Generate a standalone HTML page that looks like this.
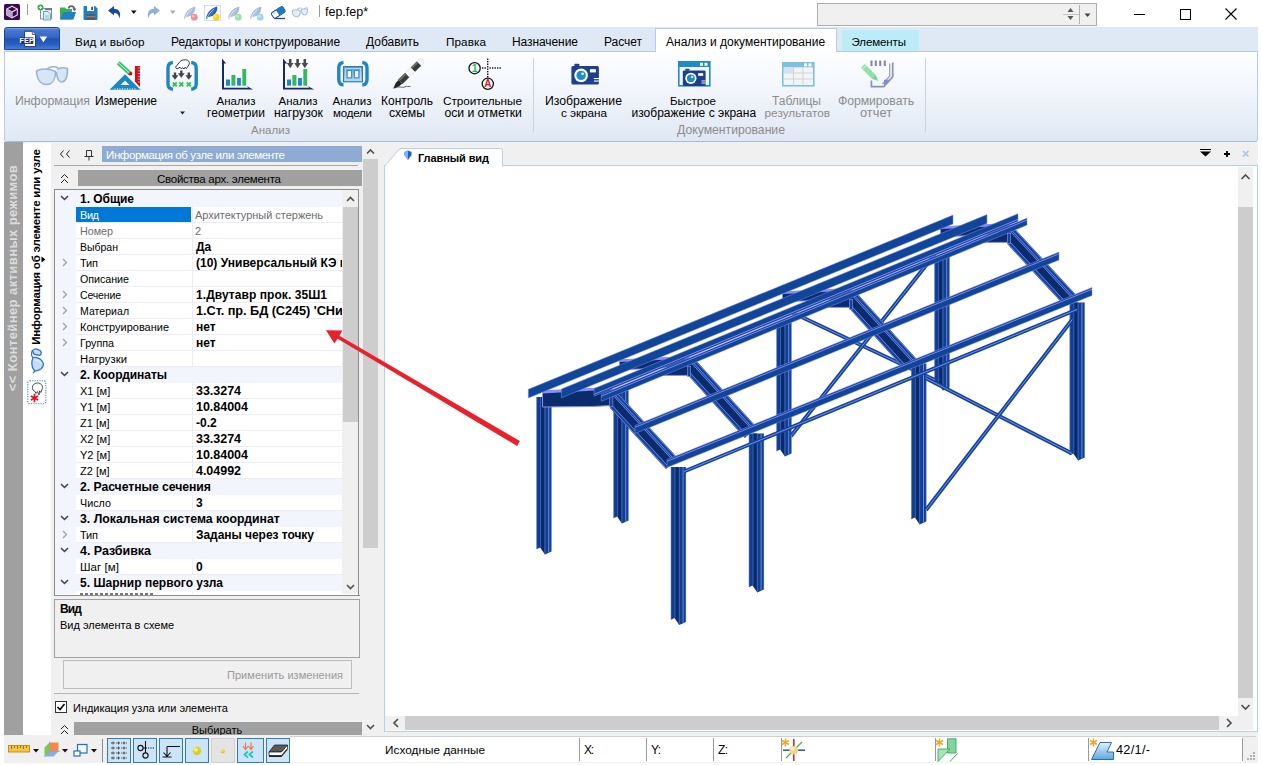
<!DOCTYPE html>
<html lang="ru"><head><meta charset="utf-8"><title>fep.fep*</title>
<style>

html,body{margin:0;padding:0;}
body{width:1262px;height:765px;overflow:hidden;background:#fff;position:relative;
 font-family:"Liberation Sans",sans-serif;font-size:12px;color:#000;}
.a{position:absolute;}
.t{position:absolute;white-space:nowrap;line-height:16px;height:16px;}
.b{font-weight:bold;}
.g{color:#8c8c8c;}
.c{text-align:center;transform:translateX(-50%);}
.pg{font-size:11px;}
svg{position:absolute;overflow:visible;}
.row{position:absolute;left:55px;width:287px;height:16px;}
.cat{background:#f3f5fc;}
.hl{position:absolute;height:1px;background:#ececf2;left:76px;width:266px;}
.tb{position:absolute;top:738px;width:22px;height:23px;border:1px solid #3a86c4;background:#cce4f7;}

</style></head>
<body>
<div class="a" style="left:319px;top:5px;width:1px;height:12px;background:#9a9a9a;"></div>
<div class="a" style="left:27px;top:4px;width:1px;height:11px;background:#9a9a9a;"></div>
<div class="a" style="left:816.5px;top:3px;width:278px;height:21px;background:#f0f0f0;border:1px solid #adadad;"></div>
<div class="a" style="left:1079px;top:5px;width:1px;height:19px;background:#b0b0b0;"></div>
<div class="a" style="left:1063px;top:14px;width:16px;height:1px;background:#c4c4c4;"></div>
<svg style="left:1066px;top:5px" width="30" height="18"><path d="M1.5 7 L4.5 3 L7.5 7Z M1.5 11 L4.5 15 L7.5 11Z" fill="#555"/><path d="M18.5 8.5 L24.5 8.5 L21.5 12Z" fill="#444"/></svg>
<svg style="left:1125px;top:0" width="137" height="27"><path d="M9 14.5H20" stroke="#000" stroke-width="1" fill="none"/><rect x="55.5" y="9.5" width="10" height="10" stroke="#000" fill="none"/><path d="M100.5 8.5 L111.5 19.5 M111.5 8.5 L100.5 19.5" stroke="#000" stroke-width="1.1" fill="none"/></svg>
<div class="a" style="left:4px;top:27px;width:1254px;height:24px;background:#dfe9f5;"></div>
<div class="a" style="left:4px;top:27px;width:54px;height:21px;background:linear-gradient(#86a8e6 0,#4a79d2 8%,#3565c4 45%,#1f52b2 52%,#2c60c2 80%,#4a7cd6 100%);border:1px solid #1a479c;border-radius:3px 3px 0 0;"></div>
<svg style="left:4px;top:27px" width="57" height="24"><path d="M20.600 4.300 h7.700 l3.200 3.200 v12.100 h-10.900 z" fill="#fff" stroke="#1a2f70" stroke-width="0.900"/><path d="M28.300 4.300 v3.200 h3.200" fill="#dfe8f8" stroke="#1a2f70" stroke-width="0.700"/><rect x="16.300" y="10.300" width="13" height="6.600" fill="#1a2f70"/><text x="22.800" y="16.200" font-size="7.200" font-weight="bold" fill="#fff" text-anchor="middle" font-family="Liberation Sans, sans-serif" letter-spacing="0.2">FEP</text><path d="M35.600 9.600 h7.600 l-3.800 5.700 z" fill="#fff"/></svg>
<div class="a" style="left:655px;top:28px;width:180px;height:24px;background:#fff;border:1px solid #b9cbe2;border-bottom:none;"></div>
<div class="a" style="left:841.5px;top:30px;width:75px;height:21px;background:#bcecf7;border:1px solid #bcecf7;border-bottom:none;"></div>
<div class="a" style="left:4px;top:51px;width:1252px;height:89px;background:linear-gradient(#fdfeff,#f1f5fb 45%,#dfe8f4);border:1px solid #b9cbe2;border-bottom-color:#a9bdd9;border-radius:0 0 3px 3px;"></div>
<div class="a" style="left:656px;top:51px;width:180px;height:1px;background:#fdfeff;"></div>
<div class="a" style="left:533px;top:58px;width:1px;height:74px;background:#c9d3e0;"></div>
<div class="a" style="left:925px;top:58px;width:1px;height:74px;background:#c9d3e0;"></div>
<svg style="left:179px;top:110px" width="8" height="6"><path d="M1 1.5h5l-2.5 3z" fill="#222"/></svg>
<div class="a" style="left:4px;top:142px;width:1254px;height:595px;background:#f0f0f0;"></div>
<div class="a" style="left:4px;top:142px;width:19px;height:593px;background:#a0a0a0;"></div>
<div class="a" style="left:23px;top:143px;width:28px;height:592px;background:#fff;border-radius:4px 0 0 4px;"></div>
<span id="vv1" class="t b" style="left:12.5px;top:277.7px;font-size:13px;color:#dcdcdc;letter-spacing:0.42px;transform:translate(-50%,-50%) rotate(-90deg);">&lt;&lt; Контейнер активных режимов</span>
<span id="vv2" class="t b" style="left:36px;top:247.2px;font-size:11.5px;letter-spacing:-0.2px;transform:translate(-50%,-50%) rotate(-90deg);">Информация об элементе или узле</span>
<svg style="left:41px;top:255.5px" width="6" height="8"><path d="M0.5 0.5v6l4-3z" fill="#000"/></svg>
<div class="a" style="left:102px;top:146px;width:260px;height:16px;background:#8eabd3;"></div>
<svg style="left:58px;top:146px" width="44" height="18"><path d="M5.5 4.5L2.5 8l3 3.5M11.5 4.5L8.5 8l3 3.5" stroke="#222" stroke-width="1" fill="none"/><path d="M28.5 4.5h5v5.5M28.5 4.5v5.5M26.5 10.500h9M31 10.500v4" stroke="#333" stroke-width="1" fill="none"/></svg>
<div class="a" style="left:54px;top:165px;width:304px;height:1px;background:#a8a8a8;"></div>
<div class="a" style="left:78px;top:170px;width:284px;height:16px;background:#a0a0a0;"></div>
<svg style="left:58px;top:171px" width="14" height="16"><path d="M3 7l3.500-3.500L10 7M3 12l3.500-3.500L10 12" stroke="#222" stroke-width="1" fill="none"/></svg>
<div class="a" style="left:363px;top:146px;width:15px;height:589px;background:#f0f0f0;"></div>
<div class="a" style="left:363px;top:159px;width:15px;height:389px;background:#cdcdcd;"></div>
<svg style="left:363px;top:146px" width="15" height="12"><path d="M4 7.500l3.500-3.500 3.500 3.500" stroke="#505050" stroke-width="1.6" fill="none"/></svg>
<svg style="left:363px;top:721px" width="15" height="12"><path d="M4 4l3.500 3.500 3.500-3.500" stroke="#505050" stroke-width="1.6" fill="none"/></svg>
<div class="a" style="left:54px;top:189px;width:304px;height:405px;background:#fff;border:1px solid #8c8c8c;overflow:hidden;"></div>
<div class="a" style="left:55px;top:190px;width:21px;height:404px;background:#f3f5fc;"></div>
<div class="a" style="left:191.5px;top:190px;width:1px;height:404px;background:#ececf2;"></div>
<div class="a" style="left:55px;top:190px;width:287px;height:17px;background:#f3f5fc;"></div>
<svg style="left:59px;top:193px" width="12" height="10"><path d="M2 3l3.500 3.500L9 3" stroke="#404040" stroke-width="1.500" fill="none"/></svg>
<div class="a" style="left:76px;top:222px;width:266px;height:1px;background:#ececf2;"></div>
<div class="a" style="left:76px;top:207px;width:115px;height:15px;background:#0078d7;"></div>
<div class="a" style="left:76px;top:238px;width:266px;height:1px;background:#ececf2;"></div>
<div class="a" style="left:76px;top:254px;width:266px;height:1px;background:#ececf2;"></div>
<div class="a" style="left:76px;top:270px;width:266px;height:1px;background:#ececf2;"></div>
<svg style="left:60px;top:256.5px" width="10" height="12"><path d="M3 2l3.500 3.500L3 9" stroke="#a0a0a0" stroke-width="1.300" fill="none"/></svg>
<div class="a" style="left:76px;top:286px;width:266px;height:1px;background:#ececf2;"></div>
<div class="a" style="left:76px;top:302px;width:266px;height:1px;background:#ececf2;"></div>
<svg style="left:60px;top:288.5px" width="10" height="12"><path d="M3 2l3.500 3.500L3 9" stroke="#a0a0a0" stroke-width="1.300" fill="none"/></svg>
<div class="a" style="left:76px;top:318px;width:266px;height:1px;background:#ececf2;"></div>
<svg style="left:60px;top:304.5px" width="10" height="12"><path d="M3 2l3.500 3.500L3 9" stroke="#a0a0a0" stroke-width="1.300" fill="none"/></svg>
<div class="a" style="left:76px;top:334px;width:266px;height:1px;background:#ececf2;"></div>
<svg style="left:60px;top:320.5px" width="10" height="12"><path d="M3 2l3.500 3.500L3 9" stroke="#a0a0a0" stroke-width="1.300" fill="none"/></svg>
<div class="a" style="left:76px;top:350px;width:266px;height:1px;background:#ececf2;"></div>
<svg style="left:60px;top:336.5px" width="10" height="12"><path d="M3 2l3.500 3.500L3 9" stroke="#a0a0a0" stroke-width="1.300" fill="none"/></svg>
<div class="a" style="left:76px;top:366px;width:266px;height:1px;background:#ececf2;"></div>
<div class="a" style="left:55px;top:367px;width:287px;height:16px;background:#f3f5fc;"></div>
<svg style="left:59px;top:369px" width="12" height="10"><path d="M2 3l3.500 3.500L9 3" stroke="#404040" stroke-width="1.500" fill="none"/></svg>
<div class="a" style="left:76px;top:398px;width:266px;height:1px;background:#ececf2;"></div>
<div class="a" style="left:76px;top:414px;width:266px;height:1px;background:#ececf2;"></div>
<div class="a" style="left:76px;top:430px;width:266px;height:1px;background:#ececf2;"></div>
<div class="a" style="left:76px;top:446px;width:266px;height:1px;background:#ececf2;"></div>
<div class="a" style="left:76px;top:462px;width:266px;height:1px;background:#ececf2;"></div>
<div class="a" style="left:76px;top:478px;width:266px;height:1px;background:#ececf2;"></div>
<div class="a" style="left:55px;top:479px;width:287px;height:16px;background:#f3f5fc;"></div>
<svg style="left:59px;top:481px" width="12" height="10"><path d="M2 3l3.500 3.500L9 3" stroke="#404040" stroke-width="1.500" fill="none"/></svg>
<div class="a" style="left:76px;top:510px;width:266px;height:1px;background:#ececf2;"></div>
<div class="a" style="left:55px;top:511px;width:287px;height:16px;background:#f3f5fc;"></div>
<svg style="left:59px;top:513px" width="12" height="10"><path d="M2 3l3.500 3.500L9 3" stroke="#404040" stroke-width="1.500" fill="none"/></svg>
<div class="a" style="left:76px;top:542px;width:266px;height:1px;background:#ececf2;"></div>
<svg style="left:60px;top:528.5px" width="10" height="12"><path d="M3 2l3.500 3.500L3 9" stroke="#a0a0a0" stroke-width="1.300" fill="none"/></svg>
<div class="a" style="left:55px;top:543px;width:287px;height:16px;background:#f3f5fc;"></div>
<svg style="left:59px;top:545px" width="12" height="10"><path d="M2 3l3.500 3.500L9 3" stroke="#404040" stroke-width="1.500" fill="none"/></svg>
<div class="a" style="left:76px;top:574px;width:266px;height:1px;background:#ececf2;"></div>
<div class="a" style="left:55px;top:575px;width:287px;height:16px;background:#f3f5fc;"></div>
<svg style="left:59px;top:577px" width="12" height="10"><path d="M2 3l3.500 3.500L9 3" stroke="#404040" stroke-width="1.500" fill="none"/></svg>
<div class="a" style="left:80px;top:593px;width:75px;height:1.5px;background:repeating-linear-gradient(90deg,#555 0 3px,#fff 3px 5px);opacity:.8;"></div>
<div class="a" style="left:54px;top:599px;width:304px;height:57px;border:1px solid #a0a0a0;background:#f0f0f0;"></div>
<div class="a" style="left:63px;top:660px;width:287px;height:27px;border:1px solid #bdbdbd;background:#f0f0f0;"></div>
<div class="a" style="left:54px;top:693px;width:305px;height:1px;background:#b4b4b4;"></div>
<div class="a" style="left:55px;top:701px;width:10px;height:10px;border:1px solid #333;background:#fff;"></div>
<svg style="left:55px;top:701px" width="12" height="12"><path d="M2.500 6l2.500 2.500L9.500 3" stroke="#000" stroke-width="1.600" fill="none"/></svg>
<div class="a" style="left:74px;top:722px;width:288px;height:13px;background:#a0a0a0;overflow:hidden;"><span id="sel" class="t c" style="left:143px;top:0px;font-size:11px;">Выбирать</span></div>
<svg style="left:58px;top:722px" width="14" height="13"><path d="M3 7l3.500-3.500L10 7M3 12l3.500-3.500L10 12" stroke="#222" stroke-width="1" fill="none"/></svg>
<div class="a" style="left:384px;top:165px;width:872px;height:565px;background:#fff;border:1px solid #b9cfe6;"></div>
<svg style="left:384px;top:145px" width="130" height="22"><path d="M0.500 21.500 L14 5.500 Q15.500 3.500 18 3.500 H116.500 Q118.500 3.500 118.500 5.500 V21.500" fill="#fff" stroke="#b9cfe6"/><path d="M24 5.500l3.500 1.500v3l-3.500 5-3.500-5v-3z" fill="#1f5fd0"/><path d="M24 5.500l-3.500 1.500v3l3.500 5z" fill="#7fb2ff"/></svg>
<svg style="left:1195px;top:146px" width="62" height="16"><path d="M5 3.500h11" stroke="#000" stroke-width="1"/><path d="M5 5.500h11l-5.500 5z" fill="#000"/><path d="M29 8h6M32 5v6" stroke="#000" stroke-width="1.800"/><path d="M48 5l5.500 5.500M53.500 5L48 10.500" stroke="#a9c4e4" stroke-width="1.700"/></svg>
<div class="a" style="left:1238px;top:167px;width:15px;height:549px;background:#f0f0f0;"></div>
<div class="a" style="left:1238px;top:207px;width:15px;height:491px;background:#cdcdcd;"></div>
<svg style="left:1238px;top:171px" width="15" height="12"><path d="M3.500 8l4-4 4 4" stroke="#505050" stroke-width="1.700" fill="none"/></svg>
<svg style="left:1238px;top:701px" width="15" height="12"><path d="M3.500 4l4 4 4-4" stroke="#505050" stroke-width="1.700" fill="none"/></svg>
<div class="a" style="left:385px;top:716px;width:868px;height:14px;background:#f0f0f0;"></div>
<div class="a" style="left:405px;top:716px;width:814px;height:14px;background:#cdcdcd;"></div>
<svg style="left:390px;top:716px" width="12" height="14"><path d="M8 3l-4 4 4 4" stroke="#505050" stroke-width="1.700" fill="none"/></svg>
<svg style="left:1223px;top:716px" width="12" height="14"><path d="M4 3l4 4-4 4" stroke="#505050" stroke-width="1.700" fill="none"/></svg>
<div class="a" style="left:4px;top:735px;width:1254px;height:28px;background:#f0f0f0;"></div>
<div class="a" style="left:290px;top:736px;width:966px;height:1px;background:#d0d0d0;"></div>
<div class="a" style="left:290px;top:737px;width:953px;height:25px;background:#fff;"></div>
<div class="a" style="left:579px;top:738px;width:1px;height:23px;background:#9a9a9a;"></div>
<div class="a" style="left:646px;top:738px;width:1px;height:23px;background:#9a9a9a;"></div>
<div class="a" style="left:713px;top:738px;width:1px;height:23px;background:#9a9a9a;"></div>
<div class="a" style="left:780.5px;top:738px;width:1px;height:23px;background:#9a9a9a;"></div>
<div class="a" style="left:934.5px;top:738px;width:1px;height:23px;background:#9a9a9a;"></div>
<div class="a" style="left:1088px;top:738px;width:1px;height:23px;background:#9a9a9a;"></div>
<div class="a" style="left:1242px;top:738px;width:1px;height:23px;background:#9a9a9a;"></div>
<svg style="left:1245px;top:750px" width="12" height="12"><g fill="#b0b0b0"><rect x="8" y="2" width="2" height="2"/><rect x="5" y="5" width="2" height="2"/><rect x="8" y="5" width="2" height="2"/><rect x="2" y="8" width="2" height="2"/><rect x="5" y="8" width="2" height="2"/><rect x="8" y="8" width="2" height="2"/></g></svg>
<div class="a" style="left:101.5px;top:739px;width:1px;height:23px;background:#8c8c8c;"></div>
<span id="ttl" class="t" style="left:325.0px;top:3.5px;font-size:12.5px;letter-spacing:-0.01px;">fep.fep*</span>
<span id="tab1" class="t" style="left:75.0px;top:34.0px;font-size:11.75px;letter-spacing:0.07px;">Вид и выбор</span>
<span id="tab2" class="t" style="left:171.0px;top:34.0px;letter-spacing:-0.01px;">Редакторы и конструирование</span>
<span id="tab3" class="t" style="left:366.0px;top:34.0px;letter-spacing:-0.01px;">Добавить</span>
<span id="tab4" class="t" style="left:446.0px;top:34.0px;font-size:11.75px;letter-spacing:0.06px;">Правка</span>
<span id="tab5" class="t" style="left:512.0px;top:34.0px;letter-spacing:-0.08px;">Назначение</span>
<span id="tab6" class="t" style="left:604.0px;top:34.0px;letter-spacing:-0.03px;">Расчет</span>
<span id="tab7" class="t" style="left:666.0px;top:34.0px;letter-spacing:0.01px;">Анализ и документирование</span>
<span id="tab8" class="t" style="left:851.5px;top:34.0px;font-size:11.5px;letter-spacing:-0.10px;">Элементы</span>
<span id="r1" class="t g" style="left:15.0px;top:93.0px;font-size:12.25px;">Информация</span>
<span id="r2" class="t" style="left:95.0px;top:93.0px;letter-spacing:-0.05px;">Измерение</span>
<span id="r3a" class="t  c" style="left:236.0px;top:93.0px;font-size:11.5px;letter-spacing:0.03px;">Анализ</span>
<span id="r3b" class="t  c" style="left:236.0px;top:105.0px;letter-spacing:0.05px;">геометрии</span>
<span id="r4a" class="t  c" style="left:298.0px;top:93.0px;font-size:11.5px;letter-spacing:0.03px;">Анализ</span>
<span id="r4b" class="t  c" style="left:298.5px;top:105.0px;font-size:12.25px;letter-spacing:0.07px;">нагрузок</span>
<span id="r5a" class="t  c" style="left:352.0px;top:93.0px;font-size:11.5px;letter-spacing:0.03px;">Анализ</span>
<span id="r5b" class="t  c" style="left:352.4px;top:105.0px;font-size:11.5px;letter-spacing:-0.18px;">модели</span>
<span id="r6a" class="t  c" style="left:407.0px;top:93.0px;letter-spacing:-0.02px;">Контроль</span>
<span id="r6b" class="t  c" style="left:407.0px;top:105.0px;font-size:12.25px;letter-spacing:-0.04px;">схемы</span>
<span id="r7a" class="t  c" style="left:482.5px;top:93.0px;font-size:11.75px;letter-spacing:-0.03px;">Строительные</span>
<span id="r7b" class="t  c" style="left:483.2px;top:105.0px;font-size:12.25px;letter-spacing:-0.06px;">оси и отметки</span>
<span id="rg1" class="t g c" style="left:270.5px;top:122.0px;font-size:11.5px;letter-spacing:0.03px;">Анализ</span>
<span id="r8a" class="t  c" style="left:583.5px;top:93.0px;font-size:12.25px;letter-spacing:-0.02px;">Изображение</span>
<span id="r8b" class="t  c" style="left:584.0px;top:105.0px;font-size:11.75px;letter-spacing:-0.05px;">с экрана</span>
<span id="r9a" class="t  c" style="left:693.0px;top:93.0px;font-size:11.5px;">Быстрое</span>
<span id="r9b" class="t  c" style="left:693.8px;top:105.0px;letter-spacing:0.01px;">изображение с экрана</span>
<span id="r10a" class="t g c" style="left:796.5px;top:93.0px;">Таблицы</span>
<span id="r10b" class="t g c" style="left:797.3px;top:105.0px;font-size:11.75px;letter-spacing:0.02px;">результатов</span>
<span id="r11a" class="t g c" style="left:876.0px;top:93.0px;font-size:12.25px;letter-spacing:-0.07px;">Формировать</span>
<span id="r11b" class="t g c" style="left:876.0px;top:105.0px;font-size:12.75px;letter-spacing:0.05px;">отчет</span>
<span id="rg2" class="t g c" style="left:731.0px;top:122.0px;font-size:12.25px;letter-spacing:-0.03px;">Документирование</span>
<span id="pt" class="t" style="left:106.0px;top:146.8px;font-size:11.5px;letter-spacing:-0.39px;color:#fff;">Информация об узле или элементе</span>
<span id="ph" class="t" style="left:157.0px;top:170.8px;font-size:11.5px;letter-spacing:-0.26px;">Свойства арх. элемента</span>
<span id="c0" class="t b" style="left:80.0px;top:190.8px;letter-spacing:-0.04px;">1. Общие</span>
<span id="n1" class="t" style="left:80.0px;top:206.8px;font-size:11px;letter-spacing:-0.45px;color:#fff;">Вид</span>
<span id="v1" class="t" style="left:195.0px;top:206.8px;font-size:11px;letter-spacing:-0.03px;color:#6d6d6d;">Архитектурный стержень</span>
<span id="n2" class="t" style="left:80.0px;top:222.8px;font-size:10.75px;letter-spacing:-0.02px;color:#6d6d6d;">Номер</span>
<span id="v2" class="t" style="left:195.0px;top:222.8px;font-size:11px;color:#6d6d6d;">2</span>
<span id="n3" class="t" style="left:80.0px;top:238.8px;font-size:10.5px;letter-spacing:-0.01px;">Выбран</span>
<span id="v3" class="t b" style="left:196.0px;top:238.8px;">Да</span>
<span id="n4" class="t" style="left:80.0px;top:254.8px;font-size:11px;letter-spacing:-0.17px;">Тип</span>
<span id="v4" class="t b" style="left:196.0px;top:254.8px;letter-spacing:0.01px;">(10) Универсальный КЭ п</span>
<span id="n5" class="t" style="left:80.0px;top:270.8px;font-size:10.75px;letter-spacing:-0.07px;">Описание</span>
<span id="n6" class="t" style="left:80.0px;top:286.8px;font-size:10.5px;letter-spacing:-0.15px;">Сечение</span>
<span id="v6" class="t b" style="left:196.0px;top:286.8px;letter-spacing:0.07px;">1.Двутавр прок. 35Ш1</span>
<span id="n7" class="t" style="left:80.0px;top:302.8px;font-size:10.5px;letter-spacing:0.05px;">Материал</span>
<span id="v7" class="t b" style="left:196.0px;top:302.8px;font-size:12.75px;letter-spacing:-0.06px;">1.Ст. пр. БД (С245) 'СНиП</span>
<span id="n8" class="t" style="left:80.0px;top:318.8px;font-size:11px;letter-spacing:-0.01px;">Конструирование</span>
<span id="v8" class="t b" style="left:196.0px;top:318.8px;">нет</span>
<span id="n9" class="t" style="left:80.0px;top:334.8px;font-size:10.75px;letter-spacing:-0.02px;">Группа</span>
<span id="v9" class="t b" style="left:196.0px;top:334.8px;">нет</span>
<span id="n10" class="t" style="left:80.0px;top:350.8px;font-size:11.25px;letter-spacing:0.06px;">Нагрузки</span>
<span id="c11" class="t b" style="left:80.0px;top:366.8px;letter-spacing:-0.03px;">2. Координаты</span>
<span id="n12" class="t" style="left:80.0px;top:382.8px;font-size:11px;">X1 [м]</span>
<span id="v12" class="t b" style="left:196.0px;top:382.8px;font-size:12.5px;letter-spacing:-0.03px;">33.3274</span>
<span id="n13" class="t" style="left:80.0px;top:398.8px;font-size:11px;">Y1 [м]</span>
<span id="v13" class="t b" style="left:196.0px;top:398.8px;font-size:12.5px;letter-spacing:-0.02px;">10.84004</span>
<span id="n14" class="t" style="left:80.0px;top:414.8px;font-size:11px;">Z1 [м]</span>
<span id="v14" class="t b" style="left:196.0px;top:414.8px;">-0.2</span>
<span id="n15" class="t" style="left:80.0px;top:430.8px;font-size:11px;">X2 [м]</span>
<span id="v15" class="t b" style="left:196.0px;top:430.8px;font-size:12.5px;letter-spacing:-0.03px;">33.3274</span>
<span id="n16" class="t" style="left:80.0px;top:446.8px;font-size:11px;">Y2 [м]</span>
<span id="v16" class="t b" style="left:196.0px;top:446.8px;font-size:12.5px;letter-spacing:-0.02px;">10.84004</span>
<span id="n17" class="t" style="left:80.0px;top:462.8px;font-size:11px;">Z2 [м]</span>
<span id="v17" class="t b" style="left:196.0px;top:462.8px;font-size:12.5px;letter-spacing:-0.03px;">4.04992</span>
<span id="c18" class="t b" style="left:80.0px;top:478.8px;font-size:12.25px;letter-spacing:-0.06px;">2. Расчетные сечения</span>
<span id="n19" class="t" style="left:80.0px;top:494.8px;font-size:10.75px;letter-spacing:0.02px;">Число</span>
<span id="v19" class="t b" style="left:196.0px;top:494.8px;">3</span>
<span id="c20" class="t b" style="left:80.0px;top:510.8px;font-size:12.25px;letter-spacing:0.02px;">3. Локальная система координат</span>
<span id="n21" class="t" style="left:80.0px;top:526.8px;font-size:11px;letter-spacing:-0.17px;">Тип</span>
<span id="v21" class="t b" style="left:196.0px;top:526.8px;letter-spacing:-0.04px;">Заданы через точку</span>
<span id="c22" class="t b" style="left:80.0px;top:542.8px;font-size:12.5px;letter-spacing:-0.04px;">4. Разбивка</span>
<span id="n23" class="t" style="left:80.0px;top:558.8px;font-size:11.5px;letter-spacing:0.06px;">Шаг [м]</span>
<span id="v23" class="t b" style="left:196.0px;top:558.8px;">0</span>
<span id="c24" class="t b" style="left:80.0px;top:574.8px;letter-spacing:0.02px;">5. Шарнир первого узла</span>
<span id="d1" class="t b" style="left:60.0px;top:600.8px;letter-spacing:-0.84px;">Вид</span>
<span id="d2" class="t" style="left:60.0px;top:616.8px;font-size:11px;letter-spacing:-0.01px;">Вид элемента в схеме</span>
<span id="ab" class="t" style="left:227.0px;top:666.8px;font-size:11px;letter-spacing:0.05px;color:#9a9a9a;">Применить изменения</span>
<span id="cb" class="t" style="left:73.0px;top:699.8px;font-size:11px;letter-spacing:-0.03px;">Индикация узла или элемента</span>
<span id="vt" class="t b" style="left:418.0px;top:149.5px;font-size:11px;letter-spacing:-0.09px;">Главный вид</span>
<span id="s1" class="t" style="left:385.0px;top:742.0px;font-size:11.75px;letter-spacing:0.05px;">Исходные данные</span>
<span id="s2" class="t" style="left:584.0px;top:742.0px;letter-spacing:-1.20px;">X:</span>
<span id="s3" class="t" style="left:651.0px;top:742.0px;letter-spacing:-0.69px;">Y:</span>
<span id="s4" class="t" style="left:718.0px;top:742.0px;letter-spacing:-0.67px;">Z:</span>
<span id="s5" class="t" style="left:1116.0px;top:742.0px;font-size:12.75px;letter-spacing:0.28px;">42/1/-</span>
<div class="a" style="left:342px;top:190px;width:16px;height:404px;background:#f0f0f0;"></div>
<div class="a" style="left:343px;top:207px;width:15px;height:215px;background:#cdcdcd;"></div>
<svg style="left:343px;top:193px" width="15" height="12"><path d="M4 8l3.500-3.500 3.500 3.500" stroke="#505050" stroke-width="1.6" fill="none"/></svg>
<svg style="left:343px;top:581px" width="15" height="12"><path d="M4 4l3.500 3.500 3.500-3.500" stroke="#505050" stroke-width="1.6" fill="none"/></svg>
<div class="a" style="left:358px;top:189px;width:1px;height:406px;background:#8c8c8c;"></div>
<div class="a" style="left:359px;top:189px;width:4px;height:406px;background:#f0f0f0;"></div><svg style="left:4px;top:4px;" width="16" height="16" viewBox="0 0 16 16"><rect width="16" height="16" rx="1.500" fill="#3a0a52"/><path d="M8 2.200 L13.300 5 V11 L8 13.800 L2.700 11 V5 Z" fill="none" stroke="#e8d8f0" stroke-width="1.100"/><path d="M2.700 5 L8 8 L13.300 5 M8 8 V13.800" stroke="#e8d8f0" stroke-width="1.100" fill="none"/><path d="M2.700 5 L8 8 V13.800 L2.700 11 Z" fill="#b9a6c8"/></svg>
<svg style="left:37px;top:4px;" width="18" height="17" viewBox="0 0 18 17"><path d="M3.500 4.500 H14.500 V15 H3.500 Z" fill="#f4f6f8" stroke="#7a8694" stroke-width="0.9"/><rect x="8" y="4" width="7" height="2.200" fill="#6f7b88"/><path d="M6.500 7.500 H11 L13.500 10 V16 H6.500 Z" fill="#d9ecf8" stroke="#4c9bd0" stroke-width="0.9"/><path d="M8 12 h4 M8 14 h4" stroke="#7cc88c" stroke-width="0.9"/><circle cx="3.500" cy="3.500" r="3" fill="#35b44a"/><path d="M2 3.500 h3 M3.500 2 v3" stroke="#fff" stroke-width="1"/></svg>
<svg style="left:59px;top:4px;" width="18" height="17" viewBox="0 0 18 17"><path d="M1 3.500 H6 L7.500 5 H13 V15.500 H1 Z" fill="#3cb054"/><path d="M4.500 8 H17 L14.500 15.500 H1.500 Z" fill="#1f7fc8"/><path d="M9.500 4.500 C10 1.500 14.500 1 15.500 5" stroke="#5a6470" stroke-width="1.600" fill="none"/><path d="M13.500 4.500 h4 l-2 2.800 z" fill="#5a6470"/></svg>
<svg style="left:83px;top:5px;" width="15" height="16" viewBox="0 0 15 16"><path d="M0.500 2 Q0.500 1 1.500 1 H12 L14.500 3.500 V14 Q14.500 15 13.500 15 H1.500 Q0.500 15 0.500 14 Z" fill="#1f80c8"/><rect x="4" y="1" width="7" height="5" fill="#fff"/><rect x="8.200" y="1.800" width="1.800" height="3.200" fill="#4a4a4a"/><rect x="3.500" y="9" width="8.500" height="6" fill="#5a5a5a"/><rect x="3.500" y="11.300" width="8.500" height="0.900" fill="#9a9a9a"/></svg>
<svg style="left:107px;top:5px;" width="16" height="15" viewBox="0 0 16 15"><path d="M1 5.500 L7 1 V3.800 C12 3.800 14.500 8 12.500 13.500 C12 9.500 10 8 7 8 V10.500 Z" fill="#1b4a96"/></svg>
<svg style="left:130px;top:10px;" width="8" height="5" viewBox="0 0 8 5"><path d="M1 0.500 h5.600 l-2.800 3.400 z" fill="#111"/></svg>
<svg style="left:145px;top:5px;" width="16" height="15" viewBox="0 0 16 15"><path d="M15 5.500 L9 1 V3.800 C4 3.800 1.500 8 3.500 13.500 C4 9.500 6 8 9 8 V10.500 Z" fill="#8fb0d8"/></svg>
<svg style="left:169px;top:10px;" width="8" height="5" viewBox="0 0 8 5"><path d="M1 0.500 h5.600 l-2.800 3.400 z" fill="#a8a8a8"/></svg>
<svg style="left:182px;top:5px;" width="17" height="16" viewBox="0 0 17 16"><path d="M2 14 C2.800 9 5 4 13.200 1.600 C13.800 5 12 9.800 7.500 11.200 C6 11.600 4.800 11.600 4.200 12 L2.800 14.200 Z" fill="#a4bcd9"/><path d="M2.600 13.800 C4.500 9.500 7 6.500 10.500 4" stroke="#fff" stroke-width="0.700" fill="none" opacity="0.850"/><path d="M6 10.800 L9.500 6.500 M4.800 9.500 L7.800 5.500" stroke="#fff" stroke-width="0.400" opacity="0.600"/><circle cx="12.200" cy="12.200" r="3.400" fill="#ee8f96"/><circle cx="11.300" cy="11.200" r="1.300" fill="#fff" opacity="0.450"/></svg>
<svg style="left:204px;top:5px;" width="17" height="16" viewBox="0 0 17 16"><rect x="0.500" y="0.500" width="16" height="15" fill="#fbfcfe" stroke="#cdd5e0" stroke-width="0.800"/><path d="M2 14 C2.800 9 5 4 13.200 1.600 C13.800 5 12 9.800 7.500 11.200 C6 11.600 4.800 11.600 4.200 12 L2.800 14.200 Z" fill="#1f5fb4"/><path d="M2.600 13.800 C4.500 9.500 7 6.500 10.500 4" stroke="#fff" stroke-width="0.700" fill="none" opacity="0.850"/><path d="M6 10.800 L9.500 6.500 M4.800 9.500 L7.800 5.500" stroke="#fff" stroke-width="0.400" opacity="0.600"/><circle cx="12.200" cy="12.200" r="3.400" fill="#ffd21e"/><circle cx="11.300" cy="11.200" r="1.300" fill="#fff" opacity="0.450"/></svg>
<svg style="left:226px;top:5px;" width="17" height="16" viewBox="0 0 17 16"><path d="M2 14 C2.800 9 5 4 13.200 1.600 C13.800 5 12 9.800 7.500 11.200 C6 11.600 4.800 11.600 4.200 12 L2.800 14.200 Z" fill="#a4bcd9"/><path d="M2.600 13.800 C4.500 9.500 7 6.500 10.500 4" stroke="#fff" stroke-width="0.700" fill="none" opacity="0.850"/><path d="M6 10.800 L9.500 6.500 M4.800 9.500 L7.800 5.500" stroke="#fff" stroke-width="0.400" opacity="0.600"/><circle cx="12.200" cy="12.200" r="3.400" fill="#9fe0a4"/><circle cx="11.300" cy="11.200" r="1.300" fill="#fff" opacity="0.450"/></svg>
<svg style="left:248px;top:5px;" width="17" height="16" viewBox="0 0 17 16"><path d="M2 14 C2.800 9 5 4 13.200 1.600 C13.800 5 12 9.800 7.500 11.200 C6 11.600 4.800 11.600 4.200 12 L2.800 14.200 Z" fill="#a4bcd9"/><path d="M2.600 13.800 C4.500 9.500 7 6.500 10.500 4" stroke="#fff" stroke-width="0.700" fill="none" opacity="0.850"/><path d="M6 10.800 L9.500 6.500 M4.800 9.500 L7.800 5.500" stroke="#fff" stroke-width="0.400" opacity="0.600"/><circle cx="12.200" cy="12.200" r="3.400" fill="#a8d0ea"/><circle cx="11.300" cy="11.200" r="1.300" fill="#fff" opacity="0.450"/></svg>
<svg style="left:270px;top:5px;" width="17" height="16" viewBox="0 0 17 16"><g transform="rotate(-33 8 7.500)"><rect x="1.500" y="4.300" width="13.500" height="6.600" rx="1.600" fill="#fff" stroke="#1b4a96" stroke-width="1"/><path d="M7.500 4.300 H13.400 Q15 4.300 15 5.900 V9.300 Q15 10.900 13.400 10.900 H7.500 Z" fill="#1f78c0"/><path d="M3.500 6 h2.500" stroke="#9ab8dc" stroke-width="0.800"/></g><path d="M4.500 13.500 H15" stroke="#1b4a96" stroke-width="1.300"/></svg>
<svg style="left:291px;top:6px;" width="18" height="13" viewBox="0 0 18 13"><g fill="#e6eff9" stroke="#a8bfde" stroke-width="1.100" stroke-linejoin="round"><path d="M10 4.200 C11.500 3 14.500 2.600 16.500 3.200 C16.800 6 16 8.800 13.800 9 C12 9 10.600 7 10 4.200 Z"/><path d="M1.200 4.800 C3.500 3.600 7 3.600 9.300 4.800 C9.300 8 8 10.800 5.500 10.800 C3 10.800 1.500 8 1.200 4.800 Z"/></g><path d="M5.500 3.800 C7 2 9.500 1.500 11.500 2.500 M13 2.800 C14.500 1.600 16 1.600 17 2.200" stroke="#a8bfde" stroke-width="1" fill="none"/></svg>
<svg style="left:34px;top:64px;" width="36" height="24" viewBox="0 0 36 24"><g fill="#d7e6f5" stroke="#9db3d4" stroke-width="1.600" stroke-linejoin="round"><path d="M23 5.500 C26 3 30 3.500 33.500 4.500 C33.500 12 31.500 18 27.500 18 C24.500 18 23 14 22.500 8"/><path d="M2.500 7 C7 4 16 4.500 21.500 7.500 C21.500 15 18.500 20.500 12.500 20.500 C6.500 20.500 3 15 2.500 7 Z"/></g><path d="M13 5 C16 2.500 21 2 24 4" stroke="#9db3d4" stroke-width="1.600" fill="none"/></svg>
<svg style="left:108px;top:60px;" width="34" height="32" viewBox="0 0 34 32"><path d="M26.900 5.900 H32 V26.900 L26.900 21.500 Z" fill="#c8141e"/><path d="M29.800 8 h2.200 M29.800 10.800 h2.200 M29.800 13.600 h2.200 M29.800 16.400 h2.200 M29.800 19.200 h2.200 M29.800 22 h2.200" stroke="#f09aa0" stroke-width="0.900"/><path d="M1.500 29.700 L17 14.200 L32.500 29.700 Z" fill="#1f86c4"/><path d="M12.600 24.900 L17 20.600 L21.400 24.900 Z" fill="#f2f7fc"/><path d="M7 28 v1.700 M9.500 28 v1.700 M12 28 v1.700 M14.500 28 v1.700 M17 28 v1.700 M19.500 28 v1.700 M22 28 v1.700 M24.500 28 v1.700 M27 28 v1.700" stroke="#d8ecf8" stroke-width="0.800"/><path d="M8.700 4.200 L11.700 1.200 L22.800 11.300 L19.800 14.300 Z" fill="#3cc46c"/><path d="M10.200 2.700 L21.300 12.800" stroke="#d0f5dc" stroke-width="0.900"/><path d="M19.800 14.300 L22.800 11.300 L24.600 13 L23.700 15 L21.700 15.500 Z" fill="#c8141e"/><path d="M22.600 13.800 L24.200 15.300 L22.300 14.900 Z" fill="#401010"/></svg>
<svg style="left:165px;top:59px;" width="34" height="33" viewBox="0 0 34 33"><path d="M8 3.500 C4.500 3.800 3 5.500 3 9 V25 C3 28.500 4.500 30 8 30.300" stroke="#1f86c4" stroke-width="3.400" fill="none"/><path d="M26.200 3.500 C29.700 3.800 31.200 5.500 31.200 9 V25 C31.200 28.500 29.700 30 26.200 30.300" stroke="#1f86c4" stroke-width="3.400" fill="none"/><path d="M8.8 13.6 h2.400 v2.600 h2.200 l-3.400 4.600 l-3.400 -4.600 h2.200 z" fill="#454545"/><path d="M15.1 11.6 h2.400 v2.600 h2.200 l-3.400 4.600 l-3.400 -4.600 h2.200 z" fill="#454545"/><path d="M22.6 13.6 h2.400 v2.600 h2.200 l-3.400 4.600 l-3.400 -4.600 h2.200 z" fill="#454545"/><path d="M7.8 23.400 l4 4 M11.8 23.400 l-4 4" stroke="#35c050" stroke-width="1.900"/><path d="M14.3 23.400 l4 4 M18.3 23.400 l-4 4" stroke="#35c050" stroke-width="1.900"/><path d="M21.8 23.400 l4 4 M25.8 23.400 l-4 4" stroke="#35c050" stroke-width="1.900"/><path d="M10.500 8.200 L14.500 3.200 C16 0.800 20 0.200 22.500 1.200 C24.500 2.200 24.800 4.500 23.800 6 L21.500 9.500 L20 8.200 L19 10 L17.600 8.600 L16.500 10 L15 8.200 L12 10 Z" fill="#fff" stroke="#222" stroke-width="0.900" stroke-linejoin="round"/></svg>
<svg style="left:220px;top:58px;" width="35" height="33" viewBox="0 0 35 33"><path d="M2 0.600 L6.200 5.400 H4 V29.800 H28.400 L26.500 28 L33.200 31.600 H2 Z" fill="#15296b"/><rect x="6" y="21.500" width="4" height="6.200" fill="#1f86c4"/><rect x="11.400" y="17" width="4" height="10.700" fill="#35b861"/><rect x="17.100" y="20" width="3.800" height="7.700" fill="#1f86c4"/><rect x="22.300" y="11" width="3.900" height="16.700" fill="#35b861"/></svg>
<svg style="left:281.3px;top:58px;" width="35" height="33" viewBox="0 0 35 33"><path d="M2 0.600 L6.200 5.400 H4 V29.800 H28.400 L26.500 28 L33.200 31.600 H2 Z" fill="#15296b"/><rect x="6" y="21.500" width="4" height="6.200" fill="#1f86c4"/><rect x="11.400" y="17" width="4" height="10.700" fill="#35b861"/><rect x="17.100" y="20" width="3.800" height="7.700" fill="#1f86c4"/><rect x="22.300" y="11" width="3.900" height="16.700" fill="#35b861"/><path d="M7.9 1 h2.600 v4 h2 l-3.300 5.200 l-3.300 -5.200 h2 z" fill="#4a4a4a"/><path d="M15.3 1 h2.600 v4 h2 l-3.300 5.200 l-3.300 -5.200 h2 z" fill="#4a4a4a"/><path d="M22.5 1 h2.600 v4 h2 l-3.300 5.200 l-3.300 -5.200 h2 z" fill="#4a4a4a"/></svg>
<svg style="left:336px;top:61px;" width="34" height="26" viewBox="0 0 34 26"><defs><linearGradient id="mg" x1="0" y1="0" x2="0" y2="1"><stop offset="0" stop-color="#4f9cd2"/><stop offset="1" stop-color="#a6d4f2"/></linearGradient></defs><path d="M7.500 1.500 C4 1.800 2.800 3.500 2.800 7 V18.500 C2.800 22 4 23.700 7.500 24" stroke="#1f86c4" stroke-width="3.400" fill="none"/><path d="M26.300 1.500 C29.800 1.800 31 3.500 31 7 V18.500 C31 22 29.800 23.700 26.300 24" stroke="#1f86c4" stroke-width="3.400" fill="none"/><rect x="7.500" y="5.600" width="19" height="15.200" fill="url(#mg)" stroke="#2a78b4" stroke-width="1.100"/><rect x="9.300" y="7.400" width="15.400" height="11.600" fill="none" stroke="#c4e0f4" stroke-width="0.900"/><rect x="11.200" y="9.600" width="4.200" height="7.200" fill="#f6faff" stroke="#3a80bc" stroke-width="0.900"/><rect x="18.600" y="9.600" width="4.200" height="7.200" fill="#f6faff" stroke="#3a80bc" stroke-width="0.900"/></svg>
<svg style="left:391px;top:57px;" width="36" height="34" viewBox="0 0 36 34"><path d="M4 31 C8 28.500 11 31.500 14 29.800 C16 28.800 17.500 30 19.500 29.300" stroke="#555" stroke-width="0.900" fill="none"/><g transform="translate(2.200,31.700) rotate(-44.200)"><rect x="8" y="-3" width="33.500" height="6" rx="2.600" fill="#f4f4f4" stroke="#d6d6d6" stroke-width="0.500"/><path d="M0 0 L6 -2.400 H10 V2.400 H6 Z" fill="#222"/><rect x="10" y="-3" width="9.500" height="6" fill="#3a3a3a"/><rect x="10" y="-3" width="9.500" height="2" fill="#6a6a6a"/><rect x="27.500" y="-3" width="8.500" height="6" fill="#3a3a3a"/><rect x="27.500" y="-3" width="8.500" height="2" fill="#6a6a6a"/></g></svg>
<svg style="left:465px;top:57.5px;" width="40" height="34" viewBox="0 0 40 34"><rect x="22" y="0.5" width="1.400" height="1.400" fill="#111"/><rect x="22" y="3" width="1.400" height="1.400" fill="#111"/><rect x="22" y="5.5" width="1.400" height="1.400" fill="#111"/><rect x="22" y="8" width="1.400" height="1.400" fill="#111"/><rect x="22" y="10.5" width="1.400" height="1.400" fill="#111"/><rect x="22" y="13" width="1.400" height="1.400" fill="#111"/><rect x="22" y="15.5" width="1.400" height="1.400" fill="#111"/><rect x="22" y="18" width="1.400" height="1.400" fill="#111"/><rect x="17" y="9.300" width="1.400" height="1.400" fill="#111"/><rect x="19.5" y="9.300" width="1.400" height="1.400" fill="#111"/><rect x="24.5" y="9.300" width="1.400" height="1.400" fill="#111"/><rect x="27" y="9.300" width="1.400" height="1.400" fill="#111"/><rect x="29.5" y="9.300" width="1.400" height="1.400" fill="#111"/><rect x="32" y="9.300" width="1.400" height="1.400" fill="#111"/><rect x="34.5" y="9.300" width="1.400" height="1.400" fill="#111"/><circle cx="9.600" cy="10.200" r="5.600" fill="#fff" stroke="#111" stroke-width="1.300"/><text x="9.600" y="14" font-size="10.500" font-weight="bold" fill="#28b860" text-anchor="middle" font-family="Liberation Sans, sans-serif">1</text><circle cx="22.800" cy="25.800" r="5.600" fill="#fff" stroke="#111" stroke-width="1.300"/><text x="22.800" y="29.400" font-size="10" font-weight="bold" fill="#e0141e" text-anchor="middle" font-family="Liberation Sans, sans-serif">A</text></svg>
<svg style="left:571px;top:63px;" width="29" height="23" viewBox="0 0 29 23"><g transform="translate(0.4,0.2) scale(1)"><rect x="3" y="0.600" width="5" height="2.500" rx="0.800" fill="#1e3f8c"/><rect x="0" y="2.800" width="27.500" height="18.600" rx="1.600" fill="#1e3f8c"/><circle cx="9.700" cy="12.200" r="6.800" fill="#fff"/><circle cx="9.700" cy="12.200" r="4.700" fill="#1f8cc8"/><circle cx="11.200" cy="10.600" r="1.400" fill="#d8f0ff"/><rect x="18.500" y="6" width="6" height="3.200" fill="#fff"/><rect x="22.500" y="14.800" width="5" height="1.100" fill="#fff"/><rect x="22.500" y="17.300" width="5" height="1.100" fill="#fff"/></g></svg>
<svg style="left:678px;top:61px;" width="33" height="26" viewBox="0 0 33 26"><rect x="0.800" y="0.800" width="31" height="24" fill="#f4f8fc" stroke="#1f8cc8" stroke-width="1.600"/><rect x="0.800" y="0.500" width="31" height="5.500" fill="#1f8cc8"/><rect x="22" y="1.800" width="3" height="3" fill="#fff"/><rect x="26.500" y="1.800" width="3" height="3" fill="#fff"/><g transform="translate(4.8,7.2) scale(0.83)"><rect x="3" y="0.600" width="5" height="2.500" rx="0.800" fill="#1e3f8c"/><rect x="0" y="2.800" width="27.500" height="18.600" rx="1.600" fill="#1e3f8c"/><circle cx="9.700" cy="12.200" r="6.800" fill="#fff"/><circle cx="9.700" cy="12.200" r="4.700" fill="#1f8cc8"/><circle cx="11.200" cy="10.600" r="1.400" fill="#d8f0ff"/><rect x="18.500" y="6" width="6" height="3.200" fill="#fff"/><rect x="22.500" y="14.800" width="5" height="1.100" fill="#fff"/><rect x="22.500" y="17.300" width="5" height="1.100" fill="#fff"/></g></svg>
<svg style="left:781.5px;top:61.5px;" width="33" height="25" viewBox="0 0 33 25"><rect x="0.800" y="0.800" width="31" height="23" fill="#f2f5f8" stroke="#7cc0e0" stroke-width="1.600"/><rect x="0.800" y="0.500" width="31" height="4.800" fill="#7cc0e0"/><rect x="22" y="1.400" width="3" height="3" fill="#fff"/><rect x="26.500" y="1.400" width="3" height="3" fill="#fff"/><rect x="2" y="5.500" width="9" height="5" fill="#d3e3f0"/><path d="M11.500 5.500 V23.500 M21 5.500 V23.500 M1.500 11 H31 M1.500 17 H31" stroke="#d2d2d2" stroke-width="1"/></svg>
<svg style="left:860px;top:59px;" width="36" height="30" viewBox="0 0 36 30"><path d="M11.400 21.500 V27.600 H23.800 L32.700 17.800 V3.500" stroke="#8a93b4" stroke-width="1.700" fill="none"/><path d="M29.700 4.500 V17.200 L22.500 25" stroke="#9aa3c0" stroke-width="1.300" fill="none"/><path d="M24 27.200 V20.800 H30 Z" fill="#7f8fc4"/><path d="M11.500 1.400 v5.600 M15.800 1.400 v5.600 M20.200 1.400 v5.600 M24.800 1.400 v5.600" stroke="#7c86ac" stroke-width="2"/><path d="M1 8.800 L4.800 5 L15.500 15.700 L11.700 19.500 Z" fill="#8fe2a6"/><path d="M11.700 19.500 L15.500 15.700 L18.300 22 Z" fill="#70d492"/><path d="M2.600 10 L6 6.600" stroke="#e4faec" stroke-width="1"/></svg>
<svg style="left:30px;top:348px;" width="15" height="26" viewBox="0 0 15 26"><g fill="#c4dcf4" stroke="#2f74c8" stroke-width="1.300" stroke-linejoin="round"><path d="M2.400 2.600 C4 1 6.500 0.800 7.600 1.400 C9.500 2 11 3.200 11.200 4.400 C11.200 6 10.800 6.800 10 7.300 C8 7.300 6 6.800 4.100 6.100 Z"/><path d="M2.900 9.600 C5.500 9.200 8.500 10 10.600 11.400 C12.500 12.800 13.500 14.500 13.500 16.100 C13.500 18 12.500 19.800 11.200 20.800 C9 22.300 6.500 23 4.700 23.200 C3 21 1.800 18.500 1.800 16.100 C1.800 13.500 2.200 11.500 2.900 9.600 Z"/></g><path d="M2.400 2.600 C1.200 5 1.500 8 2.900 9.600 M4.700 23.200 L3.200 25" stroke="#2f74c8" stroke-width="1.300" fill="none"/><path d="M5 12 C7 12 10 13.500 11 15.500" stroke="#eef6ff" stroke-width="1.200" fill="none"/></svg>
<svg style="left:27px;top:379.5px;" width="20" height="25" viewBox="0 0 20 25"><rect x="0.800" y="0.800" width="18" height="23" rx="2" fill="#fff" stroke="#3c8cd0" stroke-width="1.100" stroke-dasharray="1.200 1.200"/><path d="M6 10 C4.200 6 7 3 10.500 3 C14 3 16 5.500 15.300 8.500 L13.800 12.500 L12.600 10.800 L12 15 L10.400 11.500 L9 13.500 L7.800 11.200 Z" fill="#fff" stroke="#333" stroke-width="0.900" stroke-linejoin="round"/><path d="M7.500 13.800 v8.400 M3.900 15.900 l7.200 4.200 M11.100 15.900 l-7.200 4.200" stroke="#e01020" stroke-width="1.700"/></svg>
<svg style="left:8px;top:745px;" width="24" height="9" viewBox="0 0 24 9"><rect x="0.500" y="0.500" width="21" height="6.500" fill="#f6c544" stroke="#b88a1a" stroke-width="0.900"/><path d="M3.500 1 v3 M6.500 1 v2 M9.500 1 v3 M12.500 1 v2 M15.500 1 v3 M18.500 1 v2" stroke="#7a5a10" stroke-width="0.800"/></svg>
<svg style="left:32px;top:747.5px;" width="8" height="6" viewBox="0 0 8 6"><path d="M1 1 h6 l-3 3.600 z" fill="#111"/></svg>
<svg style="left:43px;top:741px;" width="18" height="19" viewBox="0 0 18 19"><path d="M6.500 1.500 H15.500 V10.500 H6.500 Z" fill="#f08a50"/><path d="M6.500 1.500 L1.500 6.500 V15.500 L6.500 10.500 Z" fill="#7cc850"/><path d="M6.500 10.500 H15.500 L10.500 15.500 H1.500 Z" fill="#7fb0e8"/><path d="M6.500 10.500 L1 16 M6.500 10.500 H17 M6.500 10.500 V0.500" stroke="#888" stroke-width="0.500"/></svg>
<svg style="left:61px;top:747.5px;" width="8" height="6" viewBox="0 0 8 6"><path d="M1 1 h6 l-3 3.600 z" fill="#111"/></svg>
<svg style="left:73px;top:743px;" width="16" height="15" viewBox="0 0 16 15"><rect x="4.500" y="1.500" width="9.500" height="8.500" fill="#eef5fb" stroke="#2a6eb0" stroke-width="1.200"/><rect x="1" y="8" width="6" height="5" fill="#fff" stroke="#2a6eb0" stroke-width="1.200"/></svg>
<svg style="left:90px;top:747.5px;" width="8" height="6" viewBox="0 0 8 6"><path d="M1 1 h6 l-3 3.600 z" fill="#111"/></svg>
<div class="a" style="left:107px;top:738px;width:22px;height:23px;border:1px solid #2f7cb8;background:#cce4f7;"></div>
<div class="a" style="left:133px;top:738px;width:22px;height:23px;border:1px solid #2f7cb8;background:#cce4f7;"></div>
<div class="a" style="left:159px;top:738px;width:22px;height:23px;border:1px solid #2f7cb8;background:#cce4f7;"></div>
<div class="a" style="left:185px;top:738px;width:22px;height:23px;border:1px solid #2f7cb8;background:#cce4f7;"></div>
<div class="a" style="left:211px;top:738px;width:22px;height:23px;border:1px solid #d0d0d0;background:#e4e4e4;"></div>
<div class="a" style="left:237px;top:738px;width:25px;height:23px;border:1px solid #2f7cb8;background:#cce4f7;"></div>
<div class="a" style="left:266px;top:738px;width:22px;height:23px;border:1px solid #2f7cb8;background:#cce4f7;"></div>
<svg style="left:110px;top:740px;" width="18" height="21" viewBox="0 0 18 21"><path d="M1 3 H17" stroke="#555" stroke-width="0.900" stroke-dasharray="1 1.500"/><path d="M1 8 H17" stroke="#555" stroke-width="0.900" stroke-dasharray="1 1.500"/><path d="M1 13 H17" stroke="#555" stroke-width="0.900" stroke-dasharray="1 1.500"/><path d="M1 18 H17" stroke="#555" stroke-width="0.900" stroke-dasharray="1 1.500"/><path d="M3 1.5 v3 M1.5 3 h3" stroke="#444" stroke-width="0.800"/><path d="M3 6.5 v3 M1.5 8 h3" stroke="#444" stroke-width="0.800"/><path d="M3 11.5 v3 M1.5 13 h3" stroke="#444" stroke-width="0.800"/><path d="M3 16.5 v3 M1.5 18 h3" stroke="#444" stroke-width="0.800"/><path d="M8.5 1.5 v3 M7 3 h3" stroke="#444" stroke-width="0.800"/><path d="M8.5 6.5 v3 M7 8 h3" stroke="#444" stroke-width="0.800"/><path d="M8.5 11.5 v3 M7 13 h3" stroke="#444" stroke-width="0.800"/><path d="M8.5 16.5 v3 M7 18 h3" stroke="#444" stroke-width="0.800"/><path d="M14 1.5 v3 M12.5 3 h3" stroke="#444" stroke-width="0.800"/><path d="M14 6.5 v3 M12.5 8 h3" stroke="#444" stroke-width="0.800"/><path d="M14 11.5 v3 M12.5 13 h3" stroke="#444" stroke-width="0.800"/><path d="M14 16.5 v3 M12.5 18 h3" stroke="#444" stroke-width="0.800"/></svg>
<svg style="left:135px;top:740px;" width="22" height="21" viewBox="0 0 22 21"><circle cx="5.500" cy="8" r="2.600" fill="none" stroke="#111" stroke-width="1.100"/><circle cx="10.500" cy="15.500" r="2.600" fill="none" stroke="#111" stroke-width="1.100"/><path d="M10.500 1 V13 M8 8 H12" stroke="#111" stroke-width="1.100"/><path d="M13 8 H19" stroke="#111" stroke-width="1.100" stroke-dasharray="1.200 1.200"/></svg>
<svg style="left:161px;top:742px;" width="22" height="18" viewBox="0 0 22 18"><path d="M6 4.500 H19 M6 4.500 V14.500 M1.500 15 H10.500 M2.500 10.500 L6 14.500 L9.500 10.500" stroke="#111" stroke-width="1.100" fill="none"/></svg>
<svg style="left:191px;top:745px;" width="12" height="12" viewBox="0 0 12 12"><circle cx="6" cy="6" r="4.200" fill="#d8d020"/><circle cx="4.800" cy="4.800" r="2" fill="#f4f080"/></svg>
<svg style="left:219px;top:748px;" width="8" height="8" viewBox="0 0 8 8"><circle cx="3.800" cy="3.500" r="2.100" fill="#d8d020"/><circle cx="3.300" cy="3" r="0.900" fill="#f4f080"/></svg>
<svg style="left:242px;top:741px;" width="14" height="19" viewBox="0 0 14 19"><path d="M3.500 1.500 V8 M1 5 L3.500 8.500 L6 5 M9 1.500 V8 M6.500 5 L9 8.500 L11.500 5" stroke="#f0743c" stroke-width="1.100" fill="none"/><path d="M6 10.500 L2.500 13.500 L6 16.500 M11 10.500 L7.500 13.500 L11 16.500" stroke="#20c8b8" stroke-width="1.800" fill="none"/></svg>
<svg style="left:268px;top:743px;" width="22" height="16" viewBox="0 0 22 16"><path d="M6.500 2 H19.500 L13.500 9 H1 Z" fill="#5a5a5a" stroke="#222" stroke-width="0.800"/><path d="M1 9 H13.500 L19.500 2 V5.500 L13.500 12.500 H1 Z" fill="#fff" stroke="#222" stroke-width="0.800"/><path d="M1 12.500 H13.500 L19.500 5.500 V7 L13.500 14 H1 Z" fill="#222"/></svg>
<svg style="left:781px;top:738px;" width="26" height="24" viewBox="0 0 26 24"><path d="M12.800 1 V23" stroke="#c8202a" stroke-width="1.500"/><path d="M2 12.200 H24" stroke="#1a5aa8" stroke-width="1.500"/><path d="M5 20 L21 4" stroke="#40b858" stroke-width="1.200"/><circle cx="12.800" cy="12.200" r="4.300" fill="#f6d088"/><circle cx="11.800" cy="11" r="2" fill="#fdeec8"/><path d="M4.500 0.500 v8 M1 2.500 l7 4 M8 2.500 l-7 4" stroke="#f5a623" stroke-width="1.500"/></svg>
<svg style="left:935px;top:738px;" width="26" height="25" viewBox="0 0 26 25"><path d="M12.500 0.800 H21 V15 H12.500 Z" fill="#7fd69a" stroke="#38a860" stroke-width="0.900"/><path d="M3 11 H15 L3 23.500 Z" fill="#a8e6b8" stroke="#38a860" stroke-width="0.900"/><path d="M15 23.500 L22.500 15.500" stroke="#38a860" stroke-width="1"/><path d="M4.500 0.500 v8 M1 2.500 l7 4 M8 2.500 l-7 4" stroke="#f5a623" stroke-width="1.500"/></svg>
<svg style="left:1089px;top:738px;" width="26" height="24" viewBox="0 0 26 24"><defs><linearGradient id="zg" x1="0" y1="0" x2="0" y2="1"><stop offset="0" stop-color="#e4f2fb"/><stop offset="1" stop-color="#5aa8d8"/></linearGradient></defs><path d="M11 4.500 H22.500 L18 14 H24.500 V21.500 H2.500 Z" fill="url(#zg)" stroke="#2a6eb0" stroke-width="1"/><path d="M4.500 0.500 v8 M1 2.500 l7 4 M8 2.500 l-7 4" stroke="#f5a623" stroke-width="1.500"/></svg><svg style="left:0;top:0" width="1262" height="765" viewBox="0 0 1262 765" fill="none">
<path d="M536.5 397.0 V549.2 l3.600 -1.600 l4.800 7 l6.600 -3.200 V397.0 Z" fill="#123e90"/><path d="M540.9 397.0 V547.8 l3.900 5.600 V397.0 Z" fill="#0a2968"/><line x1="536.7" y1="397.0" x2="536.7" y2="549.2" stroke="#7f90e8" stroke-width="0.4"/><line x1="540.6" y1="397.0" x2="540.6" y2="547.8" stroke="#3a62b6" stroke-width="0.9"/><line x1="544.9" y1="397.0" x2="544.9" y2="554.2" stroke="#4670c4" stroke-width="0.9"/><line x1="548.7" y1="397.0" x2="548.7" y2="552.4" stroke="#658aea" stroke-width="1.0"/><line x1="551.3" y1="397.0" x2="551.3" y2="551.0" stroke="#6f88e0" stroke-width="0.4"/>
<path d="M613.5 389.0 V518.2 l3.600 -1.600 l4.800 7 l6.600 -3.200 V389.0 Z" fill="#123e90"/><path d="M617.9 389.0 V516.8 l3.900 5.600 V389.0 Z" fill="#0a2968"/><line x1="613.7" y1="389.0" x2="613.7" y2="518.2" stroke="#7f90e8" stroke-width="0.4"/><line x1="617.6" y1="389.0" x2="617.6" y2="516.8" stroke="#3a62b6" stroke-width="0.9"/><line x1="621.9" y1="389.0" x2="621.9" y2="523.2" stroke="#4670c4" stroke-width="0.9"/><line x1="625.7" y1="389.0" x2="625.7" y2="521.4" stroke="#658aea" stroke-width="1.0"/><line x1="628.3" y1="389.0" x2="628.3" y2="520.0" stroke="#6f88e0" stroke-width="0.4"/>
<path d="M776.5 322.0 V451.2 l3.600 -1.600 l4.800 7 l6.600 -3.200 V322.0 Z" fill="#123e90"/><path d="M780.9 322.0 V449.8 l3.900 5.600 V322.0 Z" fill="#0a2968"/><line x1="776.7" y1="322.0" x2="776.7" y2="451.2" stroke="#7f90e8" stroke-width="0.4"/><line x1="780.6" y1="322.0" x2="780.6" y2="449.8" stroke="#3a62b6" stroke-width="0.9"/><line x1="784.9" y1="322.0" x2="784.9" y2="456.2" stroke="#4670c4" stroke-width="0.9"/><line x1="788.7" y1="322.0" x2="788.7" y2="454.4" stroke="#658aea" stroke-width="1.0"/><line x1="791.3" y1="322.0" x2="791.3" y2="453.0" stroke="#6f88e0" stroke-width="0.4"/>
<path d="M934.5 257.0 V385.2 l3.600 -1.600 l4.800 7 l6.600 -3.200 V257.0 Z" fill="#123e90"/><path d="M938.9 257.0 V383.8 l3.900 5.600 V257.0 Z" fill="#0a2968"/><line x1="934.7" y1="257.0" x2="934.7" y2="385.2" stroke="#7f90e8" stroke-width="0.4"/><line x1="938.6" y1="257.0" x2="938.6" y2="383.8" stroke="#3a62b6" stroke-width="0.9"/><line x1="942.9" y1="257.0" x2="942.9" y2="390.2" stroke="#4670c4" stroke-width="0.9"/><line x1="946.7" y1="257.0" x2="946.7" y2="388.4" stroke="#658aea" stroke-width="1.0"/><line x1="949.3" y1="257.0" x2="949.3" y2="387.0" stroke="#6f88e0" stroke-width="0.4"/>
<line x1="791.0" y1="312.0" x2="935.0" y2="380.0" stroke="#114598" stroke-width="4.00"/><line x1="791.0" y1="312.0" x2="935.0" y2="380.0" stroke="#8b8ef6" stroke-width="0.90"/>
<line x1="791.0" y1="436.0" x2="935.0" y2="254.0" stroke="#114598" stroke-width="4.00"/><line x1="791.0" y1="436.0" x2="935.0" y2="254.0" stroke="#8b8ef6" stroke-width="0.90"/>
<path d="M542.5 391 L612 387.5 L612 405.5 L592 406.5 L542.5 407 Z" fill="#0a2c6c" stroke="#8b8ef6" stroke-width="1"/>
<path d="M542.5 390.5 L612 387 L612 389.5 L542.5 393.5 Z" fill="#8b8ef6"/>
<path d="M619.5 360.0 L689.0 356.5 L689.0 366.5 L619.5 370.0 Z" fill="#0a2c6c" stroke="#8b8ef6" stroke-width="0.8"/>
<path d="M619.5 359.5 L689.0 356.0 L689.0 358.5 L619.5 362.0 Z" fill="#8b8ef6"/>
<path d="M655.0 375.4 L689.0 364.5 L690.5 375.4 Z" fill="#0a2c6c" stroke="#8b8ef6" stroke-width="0.9"/>
<path d="M782.5 292.0 L852.0 288.5 L852.0 298.5 L782.5 302.0 Z" fill="#0a2c6c" stroke="#8b8ef6" stroke-width="0.8"/>
<path d="M782.5 291.5 L852.0 288.0 L852.0 290.5 L782.5 294.0 Z" fill="#8b8ef6"/>
<path d="M818.0 307.4 L852.0 296.5 L853.5 307.4 Z" fill="#0a2c6c" stroke="#8b8ef6" stroke-width="0.9"/>
<path d="M940.5 227.0 L1010.0 223.5 L1010.0 233.5 L940.5 237.0 Z" fill="#0a2c6c" stroke="#8b8ef6" stroke-width="0.8"/>
<path d="M940.5 226.5 L1010.0 223.0 L1010.0 225.5 L940.5 229.0 Z" fill="#8b8ef6"/>
<path d="M976.0 242.4 L1010.0 231.5 L1011.5 242.4 Z" fill="#0a2c6c" stroke="#8b8ef6" stroke-width="0.9"/>
<clipPath id="rc0"><rect x="609.7" y="0" width="200" height="765"/></clipPath>
<g clip-path="url(#rc0)"><line x1="608.8" y1="395.0" x2="671.8" y2="463.5" stroke="#114598" stroke-width="16.00"/><line x1="608.1" y1="395.7" x2="671.1" y2="464.2" stroke="#0a2c6c" stroke-width="6.72"/><line x1="614.2" y1="390.0" x2="677.2" y2="458.5" stroke="#8b8ef6" stroke-width="0.80"/><line x1="611.0" y1="393.0" x2="674.0" y2="461.5" stroke="#8b8ef6" stroke-width="0.80"/><line x1="612.2" y1="391.9" x2="675.2" y2="460.4" stroke="#8b8ef6" stroke-width="0.80"/><line x1="605.4" y1="398.1" x2="668.4" y2="466.6" stroke="#8b8ef6" stroke-width="0.80"/><line x1="603.4" y1="400.0" x2="666.4" y2="468.5" stroke="#8b8ef6" stroke-width="0.80"/></g>
<rect x="609.7" y="396.5" width="3.200" height="10" fill="#114598" stroke="#8b8ef6" stroke-width="0.600"/>
<clipPath id="rc1"><rect x="687.5" y="0" width="200" height="765"/></clipPath>
<g clip-path="url(#rc1)"><line x1="689.3" y1="365.0" x2="750.7" y2="432.5" stroke="#114598" stroke-width="16.00"/><line x1="688.6" y1="365.7" x2="750.0" y2="433.2" stroke="#0a2c6c" stroke-width="6.72"/><line x1="694.8" y1="360.0" x2="756.2" y2="427.5" stroke="#8b8ef6" stroke-width="0.80"/><line x1="691.5" y1="363.0" x2="752.9" y2="430.5" stroke="#8b8ef6" stroke-width="0.80"/><line x1="692.7" y1="361.9" x2="754.1" y2="429.4" stroke="#8b8ef6" stroke-width="0.80"/><line x1="685.9" y1="368.1" x2="747.3" y2="435.6" stroke="#8b8ef6" stroke-width="0.80"/><line x1="683.8" y1="370.0" x2="745.2" y2="437.5" stroke="#8b8ef6" stroke-width="0.80"/></g>
<rect x="687.5" y="366.5" width="3.200" height="10" fill="#114598" stroke="#8b8ef6" stroke-width="0.600"/>
<clipPath id="rc2"><rect x="849.5" y="0" width="200" height="765"/></clipPath>
<g clip-path="url(#rc2)"><line x1="850.4" y1="298.0" x2="911.7" y2="365.5" stroke="#114598" stroke-width="16.00"/><line x1="849.7" y1="298.7" x2="911.0" y2="366.2" stroke="#0a2c6c" stroke-width="6.72"/><line x1="855.9" y1="293.0" x2="917.2" y2="360.5" stroke="#8b8ef6" stroke-width="0.80"/><line x1="852.6" y1="296.0" x2="913.9" y2="363.5" stroke="#8b8ef6" stroke-width="0.80"/><line x1="853.8" y1="294.9" x2="915.1" y2="362.4" stroke="#8b8ef6" stroke-width="0.80"/><line x1="847.0" y1="301.1" x2="908.3" y2="368.6" stroke="#8b8ef6" stroke-width="0.80"/><line x1="844.9" y1="303.0" x2="906.2" y2="370.5" stroke="#8b8ef6" stroke-width="0.80"/></g>
<rect x="849.5" y="299.5" width="3.200" height="10" fill="#114598" stroke="#8b8ef6" stroke-width="0.600"/>
<clipPath id="rc3"><rect x="1007.5" y="0" width="200" height="765"/></clipPath>
<g clip-path="url(#rc3)"><line x1="1007.0" y1="232.0" x2="1069.5" y2="299.5" stroke="#114598" stroke-width="16.00"/><line x1="1006.3" y1="232.7" x2="1068.8" y2="300.2" stroke="#0a2c6c" stroke-width="6.72"/><line x1="1012.4" y1="227.0" x2="1074.9" y2="294.5" stroke="#8b8ef6" stroke-width="0.80"/><line x1="1009.2" y1="230.0" x2="1071.7" y2="297.5" stroke="#8b8ef6" stroke-width="0.80"/><line x1="1010.4" y1="228.9" x2="1072.9" y2="296.4" stroke="#8b8ef6" stroke-width="0.80"/><line x1="1003.6" y1="235.1" x2="1066.1" y2="302.6" stroke="#8b8ef6" stroke-width="0.80"/><line x1="1001.6" y1="237.0" x2="1064.1" y2="304.5" stroke="#8b8ef6" stroke-width="0.80"/></g>
<rect x="1007.5" y="233.5" width="3.200" height="10" fill="#114598" stroke="#8b8ef6" stroke-width="0.600"/>
<path d="M528.3 389.3 L953.0 215.1 L953.0 223.9 L528.3 398.1 Z" fill="#114598" stroke="#8b8ef6" stroke-width="0.5"/>
<path d="M561.4 389.0 L987.0 214.6 L987.0 223.4 L561.4 397.8 Z" fill="#114598" stroke="#8b8ef6" stroke-width="0.5"/>
<path d="M594.0 388.6 L1018.0 213.7 L1018.0 221.3 L594.0 396.2 Z" fill="#114598" stroke="#8b8ef6" stroke-width="0.5"/><line x1="594.0" y1="394.3" x2="1018.0" y2="219.4" stroke="#8b8ef6" stroke-width="0.9"/>
<path d="M601.3 394.3 L1027.0 218.1 L1027.0 225.1 L601.3 401.3 Z" fill="#114598" stroke="#8b8ef6" stroke-width="0.5"/><line x1="601.3" y1="396.2" x2="1027.0" y2="220.0" stroke="#8b8ef6" stroke-width="0.9"/>
<path d="M635.0 425.5 L1059.0 252.0 L1059.0 260.0 L635.0 433.5 Z" fill="#114598" stroke="#8b8ef6" stroke-width="0.5"/><line x1="635.0" y1="427.3" x2="1059.0" y2="253.8" stroke="#8b8ef6" stroke-width="0.9"/>
<path d="M670.9 467.0 V619.7 l3.600 -1.600 l4.800 7 l6.600 -3.200 V467.0 Z" fill="#123e90"/><path d="M675.3 467.0 V618.3 l3.900 5.600 V467.0 Z" fill="#0a2968"/><line x1="671.1" y1="467.0" x2="671.1" y2="619.7" stroke="#7f90e8" stroke-width="0.4"/><line x1="675.0" y1="467.0" x2="675.0" y2="618.3" stroke="#3a62b6" stroke-width="0.9"/><line x1="679.3" y1="467.0" x2="679.3" y2="624.7" stroke="#4670c4" stroke-width="0.9"/><line x1="683.1" y1="467.0" x2="683.1" y2="622.9" stroke="#658aea" stroke-width="1.0"/><line x1="685.7" y1="467.0" x2="685.7" y2="621.5" stroke="#6f88e0" stroke-width="0.4"/>
<path d="M748.9 433.5 V587.2 l3.600 -1.600 l4.800 7 l6.600 -3.200 V433.5 Z" fill="#123e90"/><path d="M753.3 433.5 V585.8 l3.900 5.600 V433.5 Z" fill="#0a2968"/><line x1="749.1" y1="433.5" x2="749.1" y2="587.2" stroke="#7f90e8" stroke-width="0.4"/><line x1="753.0" y1="433.5" x2="753.0" y2="585.8" stroke="#3a62b6" stroke-width="0.9"/><line x1="757.3" y1="433.5" x2="757.3" y2="592.2" stroke="#4670c4" stroke-width="0.9"/><line x1="761.1" y1="433.5" x2="761.1" y2="590.4" stroke="#658aea" stroke-width="1.0"/><line x1="763.7" y1="433.5" x2="763.7" y2="589.0" stroke="#6f88e0" stroke-width="0.4"/>
<path d="M911.3 363.5 V519.2 l3.600 -1.600 l4.800 7 l6.600 -3.200 V363.5 Z" fill="#123e90"/><path d="M915.7 363.5 V517.8 l3.900 5.600 V363.5 Z" fill="#0a2968"/><line x1="911.5" y1="363.5" x2="911.5" y2="519.2" stroke="#7f90e8" stroke-width="0.4"/><line x1="915.4" y1="363.5" x2="915.4" y2="517.8" stroke="#3a62b6" stroke-width="0.9"/><line x1="919.7" y1="363.5" x2="919.7" y2="524.2" stroke="#4670c4" stroke-width="0.9"/><line x1="923.5" y1="363.5" x2="923.5" y2="522.4" stroke="#658aea" stroke-width="1.0"/><line x1="926.1" y1="363.5" x2="926.1" y2="521.0" stroke="#6f88e0" stroke-width="0.4"/>
<path d="M1069.7 302.5 V455.2 l3.600 -1.600 l4.800 7 l6.600 -3.200 V302.5 Z" fill="#123e90"/><path d="M1074.1 302.5 V453.8 l3.900 5.600 V302.5 Z" fill="#0a2968"/><line x1="1069.9" y1="302.5" x2="1069.9" y2="455.2" stroke="#7f90e8" stroke-width="0.4"/><line x1="1073.8" y1="302.5" x2="1073.8" y2="453.8" stroke="#3a62b6" stroke-width="0.9"/><line x1="1078.1" y1="302.5" x2="1078.1" y2="460.2" stroke="#4670c4" stroke-width="0.9"/><line x1="1081.9" y1="302.5" x2="1081.9" y2="458.4" stroke="#658aea" stroke-width="1.0"/><line x1="1084.5" y1="302.5" x2="1084.5" y2="457.0" stroke="#6f88e0" stroke-width="0.4"/>
<path d="M667.0 459.5 L1092.0 287.5 L1092.0 295.5 L667.0 467.5 Z" fill="#114598" stroke="#8b8ef6" stroke-width="0.5"/><line x1="667.0" y1="461.3" x2="1092.0" y2="289.3" stroke="#8b8ef6" stroke-width="0.9"/>
<line x1="684.0" y1="471.5" x2="1077.0" y2="309.5" stroke="#114598" stroke-width="3.80"/><line x1="684.0" y1="471.5" x2="1077.0" y2="309.5" stroke="#8b8ef6" stroke-width="0.90"/>
<line x1="925.5" y1="378.0" x2="1072.0" y2="453.5" stroke="#114598" stroke-width="4.00"/><line x1="925.5" y1="378.0" x2="1072.0" y2="453.5" stroke="#8b8ef6" stroke-width="0.90"/>
<line x1="926.0" y1="510.0" x2="1072.3" y2="319.5" stroke="#114598" stroke-width="4.00"/><line x1="926.0" y1="510.0" x2="1072.3" y2="319.5" stroke="#8b8ef6" stroke-width="0.90"/>
<path d="M326 330.200 L342.600 330.400 L339.400 335.800 L519.900 441.100 L517.100 445.900 L337.600 338.800 L334.400 343.600 Z" fill="#e8222c"/>
</svg>
</body></html>
